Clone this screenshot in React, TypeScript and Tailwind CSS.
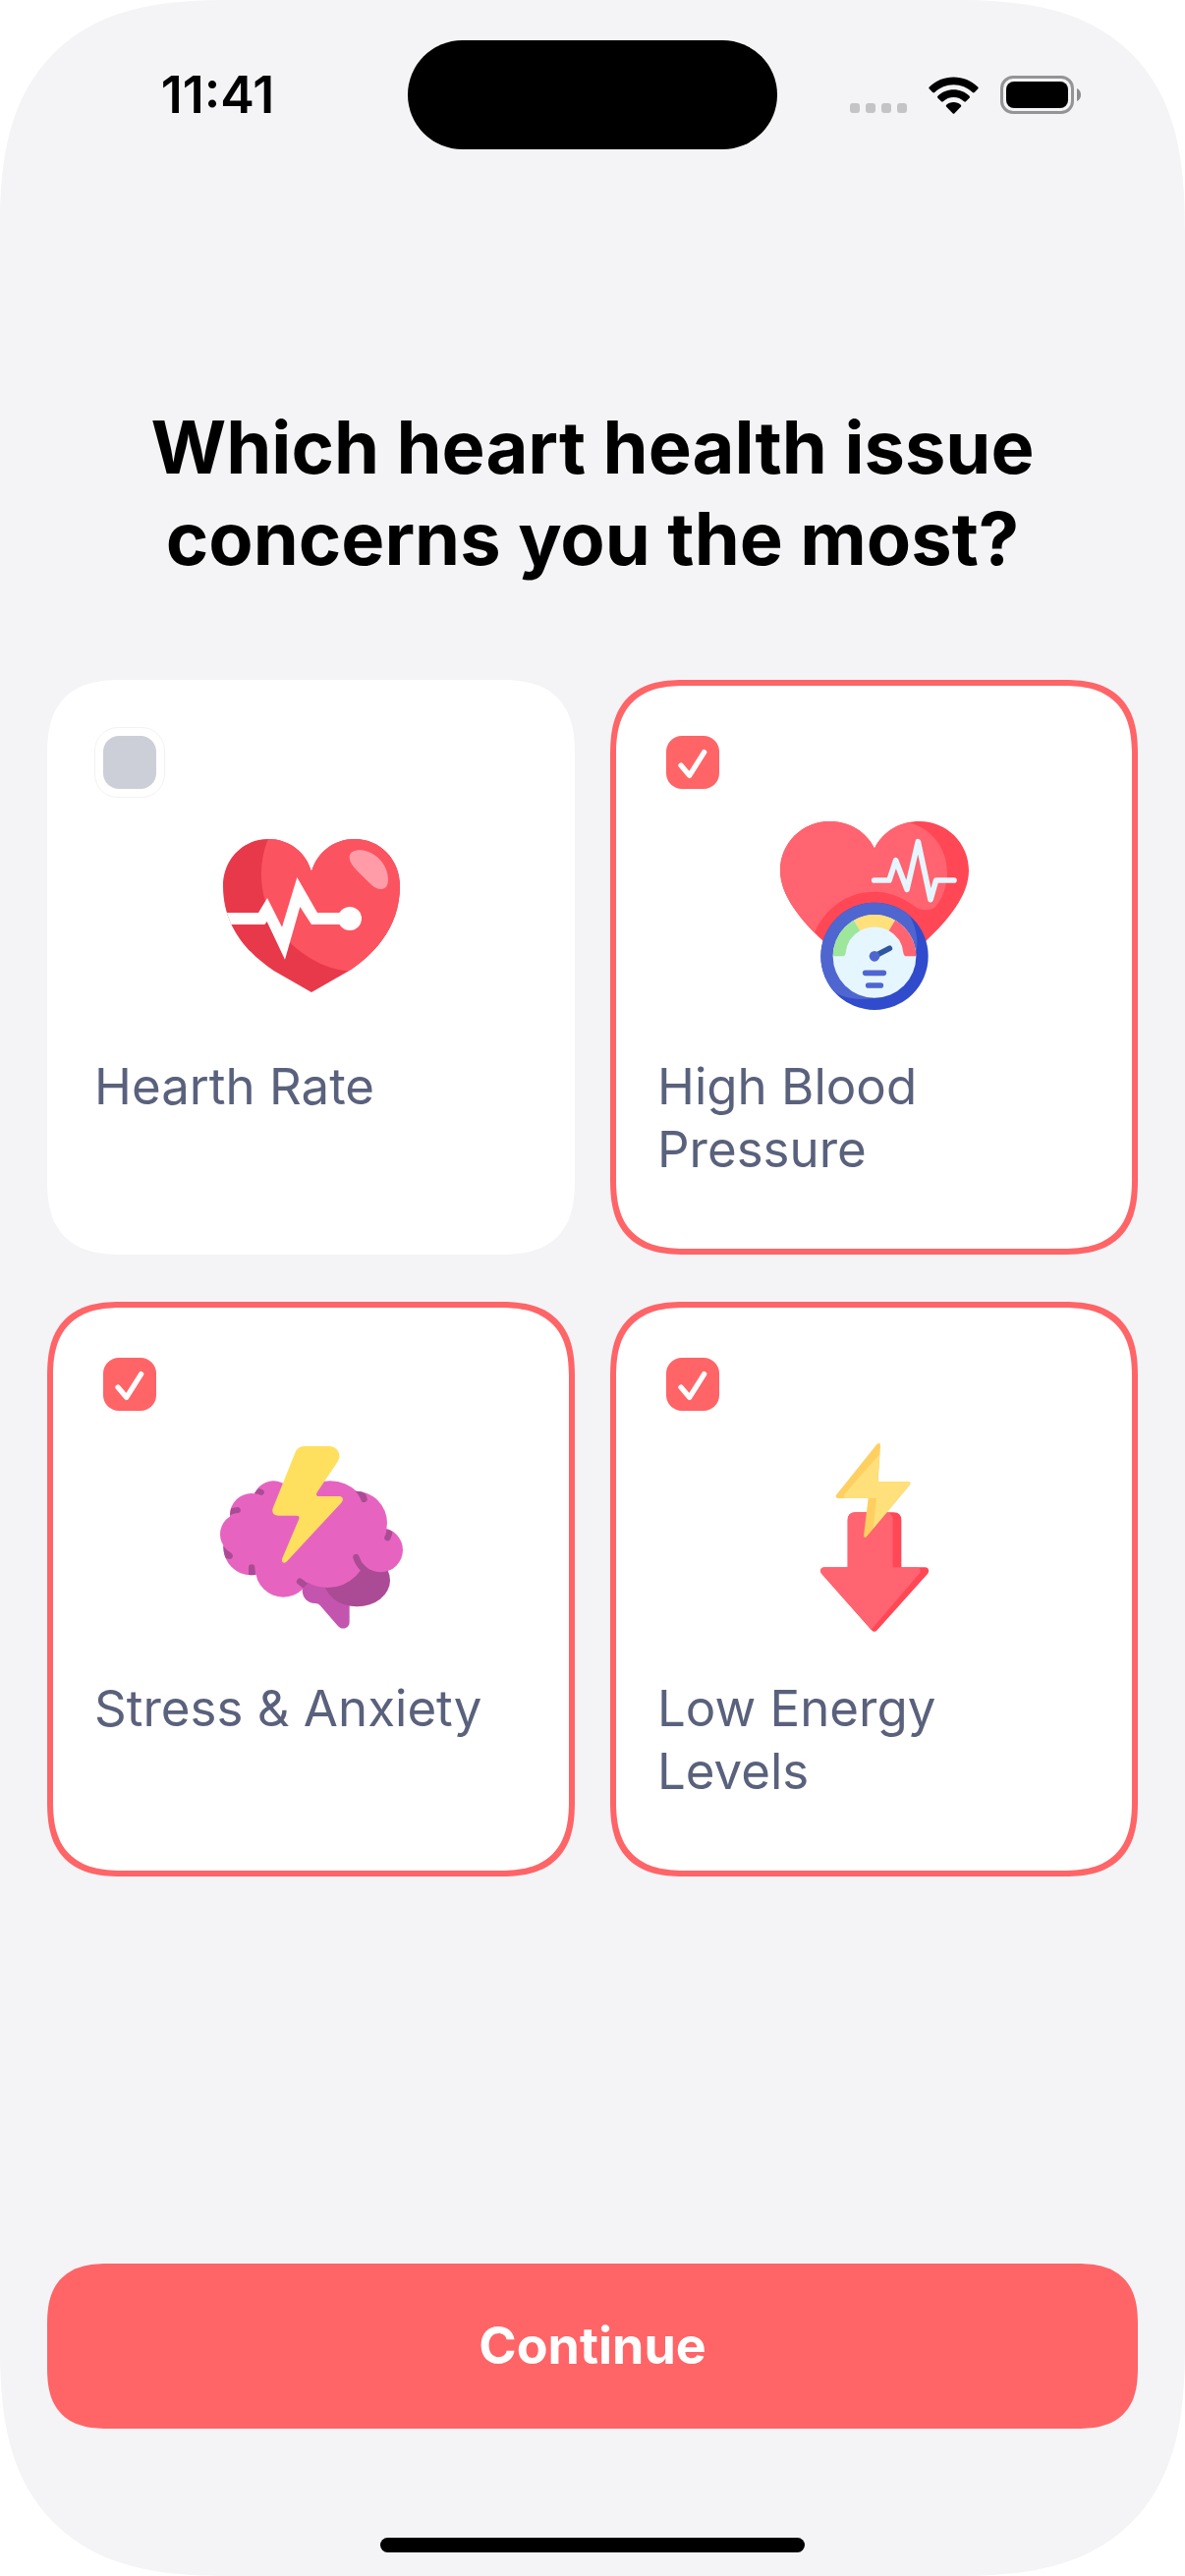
import { useState, type ReactNode } from "react";

function WifiIcon() {
  return (
    <svg viewBox="0 0 51 38" className="h-[38px] w-[51px]" aria-hidden="true">
      <path d="M25.500 0.500C35 0.500 43.500 4 50.200 10.400Q51.200 11.500 50.200 12.600L46.800 16Q45.800 16.800 44.800 16C39.500 11.200 33 8.300 25.500 8.300S11.500 11.200 6.200 16Q5.200 16.800 4.200 16L0.800 12.600Q-0.200 11.500 0.800 10.400C7.500 4 16 0.500 25.500 0.500Z" />
      <path d="M25.500 13.300C31.700 13.300 37.300 15.700 41.600 19.700Q42.600 20.700 41.600 21.700L38 25.300Q37.100 26.100 36.100 25.300C33.200 22.600 29.600 21.100 25.500 21.100S17.800 22.600 14.900 25.300Q13.900 26.100 13 25.300L9.400 21.700Q8.400 20.700 9.400 19.700C13.700 15.700 19.300 13.300 25.500 13.300Z" />
      <path d="M25.500 26C28.300 26 30.900 27 32.800 28.700Q33.700 29.700 32.800 30.700L26.500 37.200Q25.500 38.200 24.500 37.200L18.200 30.700Q17.300 29.700 18.200 28.700C20.100 27 22.700 26 25.500 26Z" />
    </svg>
  );
}

function BatteryIcon() {
  return (
    <svg viewBox="0 0 82 39" className="h-[39px] w-[82px]" aria-hidden="true">
      <rect x="1.500" y="1.500" width="72" height="36" rx="11.500" fill="none" stroke="#949496" strokeWidth="3" />
      <rect x="6" y="6" width="63" height="27" rx="8" />
      <path d="M78 13C80.500 14 82 16.500 82 19.500S80.500 25 78 26Z" fill="#8b8b8d" />
    </svg>
  );
}

function HeartRateIcon() {
  return (
    <svg viewBox="63 18 576 576" className="size-48" aria-hidden="true">
      <defs>
        <clipPath id="heart-rate-shape">
          <path d="M351 172C368 112 420 72 483 72C560 72 621 134 621 215C621 350 532 430 465 475L351 540L237 475C170 430 81 350 81 215C81 134 142 72 219 72C282 72 335 112 351 172Z" />
        </clipPath>
      </defs>
      <g clipPath="url(#heart-rate-shape)">
        <rect x="63" y="18" width="576" height="576" fill="#e8394a" />
        <path d="M219 70C193 135 192 205 210 262C225 315 250 358 287 390C335 434 398 472 468 475L640 475V18H219Z" fill="#fc5360" />
        <path d="M467 128C467 112 480 106 500 106C545 108 585 150 585 195C585 215 578 225 563 225C545 225 530 208 510 188C490 168 467 148 467 128Z" fill="#ff9ca8" />
        <path d="M60 297H189L216 252L261 341L307 189L369 297H442V333H351L316 279L270 440L215 324L208 333H60Z" fill="#fff" />
        <circle cx="468" cy="315" r="36" fill="#fff" />
      </g>
    </svg>
  );
}

function BloodPressureIcon() {
  return (
    <svg viewBox="72 78 576 576" className="size-48" aria-hidden="true">
      <defs>
        <clipPath id="pressure-heart">
          <path d="M360 161C335 110 285 78 222 78C139 78 72 145 72 228C72 305 137 382 203 443L360 560L517 443C583 382 648 305 648 228C648 145 581 78 498 78C435 78 385 110 360 161Z" />
        </clipPath>
        <clipPath id="pressure-gauge">
          <circle cx="360" cy="490" r="164" />
        </clipPath>
      </defs>
      <g clipPath="url(#pressure-heart)">
        <rect x="72" y="78" width="576" height="576" fill="#ff4755" />
        <path d="M460 80C535 98 582 160 582 235C582 275 566 318 546 339C530 353 500 352 480 336C440 306 400 293 360 293C280 293 210 340 176 420L60 440V70H460Z" fill="#ff6470" />
      </g>
      <path d="M359 258H405L425 197L459 286L493 140L531 317L548 258H603" fill="none" stroke="#e6f6fe" strokeWidth="17" strokeLinecap="round" strokeLinejoin="round" />
      <g clipPath="url(#pressure-gauge)">
        <rect x="190" y="320" width="340" height="340" fill="#304bcb" />
        <circle cx="320" cy="451" r="170" fill="#4f66d0" />
      </g>
      <circle cx="360" cy="490" r="127" fill="#e6f6fe" />
      <path d="M233 490A127 127 0 0 1 297 380L316 412A88 88 0 0 0 272 479Q271 490 261 490Z" fill="#9ee69b" />
      <path d="M297 380A127 127 0 0 1 423 380L404 412A88 88 0 0 0 316 412Z" fill="#ffe07a" />
      <path d="M487 490A127 127 0 0 0 423 380L404 412A88 88 0 0 1 448 479Q449 490 459 490Z" fill="#ff6470" />
      <path d="M360 490L406 466" stroke="#2f56a0" strokeWidth="17" strokeLinecap="round" />
      <circle cx="360" cy="490" r="16" fill="#4f66d0" />
      <path d="M332 541H388M341 579H379" stroke="#4f66d0" strokeWidth="17" strokeLinecap="round" />
    </svg>
  );
}

function StressIcon() {
  return (
    <svg viewBox="63 57 576 576" className="size-48" aria-hidden="true">
      <path d="M323 505C323 530 340 546 362 546Q371 545 377 552L431 614C445 630 467 622 467 603V480L340 470Z" fill="#c455af" />
      <ellipse cx="490" cy="475" rx="101" ry="81" fill="#ab4b95" />
      <g fill="#e664c0">
        <circle cx="235" cy="235" r="63" />
        <circle cx="168" cy="276" r="66" />
        <circle cx="136" cy="335" r="64" />
        <circle cx="167" cy="375" r="85" />
        <circle cx="265" cy="442" r="85" />
        <circle cx="408" cy="290" r="118" />
        <circle cx="485" cy="300" r="97" />
        <circle cx="562" cy="383" r="68" />
        <circle cx="400" cy="375" r="123" />
        <path d="M168 215L250 190L400 200L500 300V400L400 450H260L130 400Z" />
      </g>
      <g fill="#ab4b95">
        <path d="M176 211L190 195L202 199A9 9 0 0 1 197 216C190 213 183 211 176 211Z" />
        <path d="M102 277L105 256L124 252A9 9 0 0 1 127 270C118 270 109 273 102 277Z" />
        <path d="M82 370C90 382 98 388 107 393A10 10 0 0 1 100 411L89 407C84 395 82 385 82 370Z" />
        <path d="M159 436A9 9 0 0 1 178 436L180 459L168 460L159 459Z" />
        <path d="M484 203C498 203 510 206 517 213L521 225A9 9 0 0 1 502 230C498 219 492 210 484 203Z" />
        <path d="M580 320L591 323L598 328C597 338 595 343 592 349A9 9 0 0 1 574 343C578 335 580 328 580 320Z" />
        <path d="M309 487A9 9 0 0 1 322 472L340 485L326 500Z" />
      </g>
      <path d="M487 405Q493 425 510 442" fill="none" stroke="#ab4b95" strokeWidth="19" strokeLinecap="round" />
      <path d="M329 66H404C430 66 445 92 431 113L368 207Q362 219 375 219H436C447 219 450 230 443 238L276 418C268 427 257 420 262 408L313 288Q316 278 306 278H250C236 278 229 268 233 256L301 86Q309 66 329 66Z" fill="#ffe05e" />
    </svg>
  );
}

function LowEnergyIcon() {
  return (
    <svg viewBox="-18 57 576 576" className="size-48" aria-hidden="true">
      <path d="M188 292Q188 268 212 268H328Q352 268 352 292V436H424C435 436 439 447 432 456L278 628Q270 637 261 628L109 456C101 447 106 436 118 436H188Z" fill="#ff4755" />
      <path d="M188 292Q188 268 212 268H303Q326 269 326 292V436H400C410 437 413 447 406 456L260 626L109 456C101 447 106 436 118 436H188Z" fill="#ff6470" />
      <path d="M278 59Q287 54 288 64L281 174H374Q382 176 378 184L246 342Q238 348 237 340L251 225H158Q149 222 153 215Z" fill="#ffcf61" />
      <path d="M286 90L280 174H374Q382 176 378 184L266 317L276 225H178Q174 219 180 211Z" fill="#ffe07a" />
    </svg>
  );
}

type Issue = { id: string; label: string; icon: ReactNode };

const issues: Issue[] = [
  { id: "heart-rate", label: "Hearth Rate", icon: <HeartRateIcon /> },
  { id: "blood-pressure", label: "High Blood Pressure", icon: <BloodPressureIcon /> },
  { id: "stress", label: "Stress & Anxiety", icon: <StressIcon /> },
  { id: "energy", label: "Low Energy Levels", icon: <LowEnergyIcon /> },
];

function IssueCard({ issue, checked, onToggle }: { issue: Issue; checked: boolean; onToggle: () => void }) {
  return (
    <label
      htmlFor={issue.id}
      className="flex cursor-pointer flex-col rounded-[60px] border-[6px] border-white bg-white px-[42px] pt-[42px] pb-[69px] has-[:checked]:border-[#ff6467] supports-[corner-shape:squircle]:rounded-[78px] supports-[corner-shape:squircle]:[corner-shape:superellipse(1.4)]"
    >
      <span className="grid size-[72px] place-items-center rounded-3xl border border-[#f2f2f4] has-[:checked]:border-transparent">
        <input
          id={issue.id}
          type="checkbox"
          checked={checked}
          onChange={onToggle}
          className="peer col-start-1 row-start-1 size-[54px] appearance-none rounded-2xl bg-[#cdcfd8] checked:bg-[#ff6467]"
        />
        <svg
          viewBox="0 0 162 162"
          className="pointer-events-none invisible col-start-1 row-start-1 size-[54px] peer-checked:visible"
          aria-hidden="true"
        >
          <path d="M45 90L71 121L116 50" fill="none" stroke="#fff" strokeWidth="16" strokeLinecap="round" strokeLinejoin="round" />
        </svg>
      </span>
      <span className="mt-6 flex justify-center">{issue.icon}</span>
      <span className="mt-[46px] text-[51px] leading-[64px] text-[#5a617c]">{issue.label}</span>
    </label>
  );
}

export default function App() {
  const [selected, setSelected] = useState<string[]>(["blood-pressure", "stress", "energy"]);
  const toggle = (id: string) =>
    setSelected((current) => (current.includes(id) ? current.filter((item) => item !== id) : [...current, id]));

  return (
    <div className="bg-white font-['Inter','Liberation_Sans',sans-serif]">
      <div className="flex min-h-screen flex-col rounded-[186px] bg-[#f4f4f7] pt-[41px] pb-6 supports-[corner-shape:squircle]:rounded-[236px] supports-[corner-shape:squircle]:[corner-shape:superellipse(1.4)]">
        <header className="grid grid-cols-[1fr_auto_1fr] items-center">
          <div className="flex justify-center pl-7 text-[52px] leading-[64px] font-semibold text-black">
            <time>11:41</time>
          </div>
          <div className="h-[111px] w-[376px] rounded-full bg-black" />
          <div className="flex items-center justify-center gap-[22px] pr-8">
            <div className="flex gap-1.5 self-end pb-px">
              <span className="h-[10px] w-[10px] rounded-[3px] bg-[#c4c4c6]" />
              <span className="h-[10px] w-[10px] rounded-[3px] bg-[#c4c4c6]" />
              <span className="h-[10px] w-[10px] rounded-[3px] bg-[#c4c4c6]" />
              <span className="h-[10px] w-[10px] rounded-[3px] bg-[#c4c4c6]" />
            </div>
            <WifiIcon />
            <BatteryIcon />
          </div>
        </header>

        <main className="flex flex-1 flex-col px-12 pt-[257px]">
          <h1 className="mx-auto max-w-[960px] text-center text-[74px] leading-[93px] font-bold text-black">
            Which heart health issue concerns you the most?
          </h1>
          <div className="mt-[97px] grid grid-cols-2 gap-x-9 gap-y-12">
            {issues.map((issue) => (
              <IssueCard
                key={issue.id}
                issue={issue}
                checked={selected.includes(issue.id)}
                onToggle={() => toggle(issue.id)}
              />
            ))}
          </div>
          <button
            type="button"
            className="mt-auto h-[168px] w-full rounded-[48px] bg-[#ff6467] text-[52px] leading-[64px] font-bold text-white supports-[corner-shape:squircle]:rounded-[64px] supports-[corner-shape:squircle]:[corner-shape:superellipse(1.4)]"
          >
            Continue
          </button>
        </main>

        <div className="mx-auto mt-[111px] h-[15px] w-[432px] rounded-full bg-black" />
      </div>
    </div>
  );
}
